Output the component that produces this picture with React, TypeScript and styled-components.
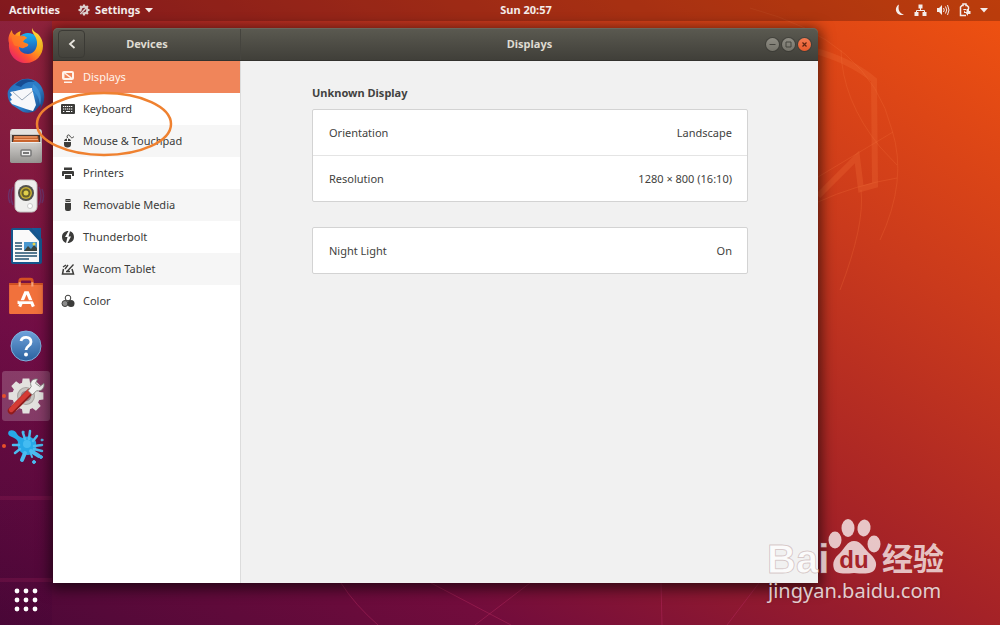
import React from "react";
import styled, { createGlobalStyle } from "styled-components";

const GlobalStyle = createGlobalStyle`
  *, *::before, *::after { box-sizing: border-box; }
  body { margin: 0; }
  body, button { font-family: "Noto Sans", "Noto Sans CJK SC", sans-serif; font-size: 11px; line-height: 16px; }
  button { margin: 0; padding: 0; border: 0; background: none; color: inherit; cursor: default; }
`;

const Desktop = styled.div`
  position: relative;
  display: flex;
  flex-direction: column;
  min-height: 100vh;
  overflow: hidden;
  background: linear-gradient(to top right, #4c0838 0%, #720c3c 25%, #a42227 50%, #ca3a1c 74%, #f05210 100%);
`;

const Wallpaper = styled.svg`
  position: absolute;
  inset: 0;
  width: 100%;
  height: 100%;
`;

const TopBar = styled.header`
  position: relative;
  display: grid;
  grid-template-columns: 1fr auto 1fr;
  align-items: center;
  height: 21px;
  padding: 0 12px 1px 9px;
  background: rgba(30, 0, 0, 0.25);
  color: #f4ecea;
`;

const BarGroup = styled.div<{ $end?: boolean }>`
  display: flex;
  align-items: center;
  gap: ${(p) => (p.$end ? 9 : 18)}px;
  justify-content: ${(p) => (p.$end ? "flex-end" : "flex-start")};
`;

const BarButton = styled.button`
  display: flex;
  align-items: center;
  gap: 5px;
  font-weight: 700;
`;

const Clock = styled(BarButton)`
  margin-left: 55px;
`;

const Body = styled.div`
  position: relative;
  display: flex;
  flex: 1;
`;

const Dock = styled.nav`
  display: flex;
  flex-direction: column;
  align-items: center;
  width: 52px;
  background: linear-gradient(rgba(120, 34, 80, 0.5), rgba(110, 16, 90, 0.3) 50%, rgba(60, 0, 50, 0.2));
`;

const DockItem = styled.button<{ $active?: boolean; $running?: boolean }>`
  position: relative;
  display: flex;
  align-items: center;
  justify-content: center;
  width: 48px;
  height: 50px;
  border-radius: 3px;
  background: ${(p) => (p.$active ? "rgba(255,255,255,0.2)" : "none")};
  &::before {
    content: "";
    display: ${(p) => (p.$running ? "block" : "none")};
    position: absolute;
    left: 0;
    width: 4px;
    height: 4px;
    border-radius: 2px;
    background: #e8502a;
  }
`;

const AppsButton = styled(DockItem)`
  margin-top: auto;
`;

const Workspace = styled.main`
  display: flex;
  flex: 1;
  padding: 7px 18.2% 42px 1px;
`;

const Window = styled.section`
  position: relative;
  display: grid;
  grid-template-columns: 188px 1fr;
  grid-template-rows: 33px 1fr;
  flex: 1;
  border-radius: 5px 5px 0 0;
  box-shadow: 0 3px 14px 3px rgba(0, 0, 0, 0.6);
`;

const HeaderPart = styled.header<{ $side: "left" | "right" }>`
  display: grid;
  grid-template-columns: ${(p) => (p.$side === "left" ? "27px 1fr 27px" : "57px 1fr 57px")};
  align-items: center;
  padding: 0 5px;
  border-radius: ${(p) => (p.$side === "left" ? "5px 0 0 0" : "0 5px 0 0")};
  background: linear-gradient(#5b5a51, #403f39);
  box-shadow: inset 0 1px 0 #69675d, inset ${(p) => (p.$side === "left" ? "-1px" : "0")} 0 0 #45443e;
  border-bottom: 1px solid #33322e;
  color: #dfdbd2;
`;

const Title = styled.h1`
  grid-column: 2;
  margin: 0;
  font-size: 11px;
  line-height: 16px;
  font-weight: 700;
  text-align: center;
`;

const BackButton = styled.button`
  display: flex;
  align-items: center;
  justify-content: center;
  width: 27px;
  height: 28px;
  border: 1px solid #3b3a35;
  border-radius: 4px;
`;

const Controls = styled.div`
  display: flex;
  justify-content: flex-end;
  gap: 3px;
  padding-right: 2px;
`;

const Control = styled.button<{ $close?: boolean }>`
  display: flex;
  width: 13px;
  height: 13px;
  border-radius: 50%;
  background: ${(p) => (p.$close ? "linear-gradient(#f47b52, #e85a2c)" : "linear-gradient(#8f8d84, #75736a)")};
  box-shadow: 0 0 0 1px rgba(45, 44, 40, 0.4);
`;

const Sidebar = styled.nav`
  background: #fff;
  border-right: 1px solid #dcdcdc;
`;

const SideItem = styled.button<{ $selected?: boolean }>`
  display: flex;
  align-items: center;
  gap: 8px;
  width: 100%;
  height: 32px;
  padding: 0 8px;
  color: ${(p) => (p.$selected ? "#fff3ec" : "#3c3c3a")};
  &:nth-child(odd) { background: #f6f6f6; }
  &:nth-child(even) { background: #fff; }
  && { ${(p) => (p.$selected ? "background: #f0855a;" : "")} }
`;

const Content = styled.div`
  padding: 24px 70px 24px 71px;
  background: #f1f1f1;
  color: #424240;
`;

const Heading = styled.h2`
  margin: 0 0 8px;
  font-size: 11px;
  line-height: 16px;
  font-weight: 700;
`;

const Card = styled.div`
  margin-bottom: 25px;
  border: 1px solid #d3d3d3;
  border-radius: 2px;
  background: #fff;
`;

const CardRow = styled.button`
  display: flex;
  align-items: center;
  justify-content: space-between;
  width: 100%;
  height: 45px;
  padding: 0 15px 0 16px;
  & + & { height: 46px; border-top: 1px solid #e4e4e4; }
`;

const Marker = styled.svg`
  position: absolute;
  left: -19px;
  top: 62px;
  pointer-events: none;
`;

const Watermark = styled.aside`
  position: absolute;
  right: 50px;
  bottom: 25px;
  display: flex;
  flex-direction: column;
  color: rgba(255, 255, 255, 0.78);
`;

const MarkUrl = styled.span`
  font-size: 20px;
  line-height: 18px;
  text-shadow: 0 0 2px rgba(90, 30, 30, 0.5);
`;

const sideIcons: Record<string, React.ReactNode> = {
  Displays: (
    <>
      <path fill="currentColor" fillRule="evenodd" d="M3 1h8a2 2 0 0 1 2 2v5a2 2 0 0 1-2 2H3a2 2 0 0 1-2-2V3a2 2 0 0 1 2-2zm.500 2v5h7.500V3z" />
      <path d="M3.500 3l7 5.200" stroke="currentColor" strokeWidth="1.500" />
      <path d="M3 11.500h8V13H3z" fill="currentColor" />
    </>
  ),
  Keyboard: (
    <>
      <rect x="0" y="2" width="14" height="10" rx="1" fill="currentColor" />
      <path d="M2 4.500h10M2 7h10M2 9.500h2M10 9.500h2" stroke="#fff" strokeDasharray="1.300 .7" />
      <path d="M5 9.500h4" stroke="#fff" />
    </>
  ),
  "Mouse & Touchpad": (
    <>
      <path d="M3 7h3V4.500A3 3 0 0 0 3 7zM7 7h3a3 3 0 0 0-3-2.500zM3 8h7v2.500a3.500 3 0 0 1-7 0z" fill="currentColor" />
      <path d="M6.500 4C5 1 8 0 9 2s2 2.500 4 .5" fill="none" stroke="currentColor" />
    </>
  ),
  Printers: (
    <path fill="currentColor" d="M3 1.500h8V4H3zM2 5h10a1 1 0 0 1 1 1v4h-2V8H3v2H1V6a1 1 0 0 1 1-1zM4 9h6v4H4z" />
  ),
  "Removable Media": (
    <path fill="currentColor" fillRule="evenodd" d="M4.500 1h5v3h-5zM5.500 2v1h1V2zm2 0v1h1V2zM4 5h6v6a2 2 0 0 1-2 2H6a2 2 0 0 1-2-2z" />
  ),
  Thunderbolt: (
    <path fill="currentColor" d="M7.500 1 4 7h2.500L5 13C2.500 12 1 10 1 7c0-3.500 2.500-6 6.500-6zM9 1.200C11.500 2 13 4 13 7c0 3.500-2.500 6-6.500 6L10 6.500H7.500z" />
  ),
  "Wacom Tablet": (
    <>
      <path d="M2.500 7 1.500 12h11L11 7" fill="none" stroke="currentColor" strokeWidth="1.500" />
      <path d="M12.500 2.500 6 9.500M2 5l3-2M4 7l3-4M5 9.500h4" stroke="currentColor" strokeWidth="1.300" fill="none" />
    </>
  ),
  Color: (
    <>
      <circle cx="7" cy="4" r="2.800" fill="none" stroke="currentColor" />
      <circle cx="4" cy="9.500" r="3" fill="#8b8b8b" stroke="currentColor" />
      <circle cx="10" cy="9.500" r="3.500" fill="currentColor" />
    </>
  ),
};

const FirefoxIcon = () => (
  <svg width="36" height="38" viewBox="0 0 36 38">
    <defs>
      <linearGradient id="fox" x1="1" y1="0" x2="0.1" y2="1">
        <stop offset="0" stopColor="#fff04a" /><stop offset=".4" stopColor="#ffb01a" />
        <stop offset=".68" stopColor="#ff542f" /><stop offset="1" stopColor="#e3137c" />
      </linearGradient>
      <linearGradient id="globe" x1="0" y1="0" x2="0" y2="1">
        <stop offset="0" stopColor="#18b4f5" /><stop offset="1" stopColor="#2440a0" />
      </linearGradient>
    </defs>
    <circle cx="20" cy="18" r="12" fill="url(#globe)" />
    <path fill="url(#fox)" d="M24 1c-1 6 6 8 5 17-1 6-5 9-9 9-5 0-9-3-9-7 2 1 4 2 6 0 2-1 4-1 3-3-2-1-3-1-5-2 0-2 2-3 4-4-2-2-4-2-5-1l-2-1c0-2 0-3 1-5-3 1-5 2-6 4-2-1-3-2-3-5C0 8 0 13 1 16c-1 12 7 20 17 20s17-8 17-17c0-5-2-9-5-12-3-2-5-3-6-6z" />
    <path fill="#ff7a26" d="M4 6c2 3 5 3 7 3 3-1 6 0 8 2-2 1-5 3-3 5l4 1c1 2-3 5-8 3-2-1-4 0-6-2-2-4-3-8-2-12z" opacity=".75" />
  </svg>
);

const ThunderbirdIcon = () => (
  <svg width="38" height="38" viewBox="0 0 38 38">
    <defs><linearGradient id="bird" x1="0" y1="0" x2="1" y2="1">
      <stop offset="0" stopColor="#256cb8" /><stop offset=".6" stopColor="#2f83cc" /><stop offset="1" stopColor="#12387a" />
    </linearGradient></defs>
    <path fill="url(#bird)" d="M1 14C4 8 9 6 12 4 17 0 29 1 34 9c5 8 4 17-1 23l1-5-6 7c-4 2-8 2-12 1L5 28C1 24 0 18 1 14z" />
    <path fill="#174c91" d="M8 8C14 1 23 1 28 5c-7-1-11 1-14 5z" />
    <path fill="#f7f8fa" d="M3 15c8-1 14-4 22-4l4 17-3 6-7-2-14-5-2-3 2-1-2-3 2-2z" />
    <path d="M6 15l9 8 11-9" stroke="#9aa8b8" strokeWidth="1" fill="none" />
    <path fill="#3c91d8" d="M26 7c8 6 9 14 7 21-1-9-4-12-8-15z" />
  </svg>
);

const FilesIcon = () => (
  <svg width="36" height="38" viewBox="0 0 36 38">
    <defs><linearGradient id="drawer" x1="0" y1="0" x2="0" y2="1">
      <stop offset="0" stopColor="#d2d0cd" /><stop offset="1" stopColor="#969491" />
    </linearGradient></defs>
    <rect x="2" y="2" width="32" height="34" rx="3" fill="url(#drawer)" />
    <path d="M4 2h28l2 5H2z" fill="#e3e1de" />
    <path d="M4 8h28v8H4z" fill="#46362f" />
    <path d="M6 9h24l1 6H5z" fill="#c9652f" /><path d="M6 10h23M6 12.500h24" stroke="#f5a878" />
    <rect x="2" y="15" width="32" height="21" rx="2" fill="url(#drawer)" />
    <path d="M3 15.500h30" stroke="#eee" />
    <rect x="13" y="23" width="10" height="6" rx="1" fill="#eee" stroke="#777" strokeWidth="1.500" />
    <rect x="15" y="25" width="6" height="2" fill="#777" />
  </svg>
);

const MusicIcon = () => (
  <svg width="38" height="36" viewBox="0 0 38 36">
    <path d="M6 9q-4 9 0 18M3 11q-3 7 0 14M32 9q4 9 0 18M35 11q3 7 0 14" stroke="#5c4b92" fill="none" strokeWidth="1.500" opacity=".5" />
    <rect x="8" y="2" width="22" height="32" rx="5" fill="#eeeeed" stroke="#c4c3c1" />
    <circle cx="19" cy="15" r="8" fill="#52524d" />
    <circle cx="19" cy="15" r="6" fill="#c6ae31" /><circle cx="19" cy="15" r="4.500" fill="#675f2a" />
    <circle cx="19" cy="15" r="2.500" fill="#e1d04c" /><circle cx="23" cy="28" r="2.500" fill="#fff" stroke="#ccc" />
  </svg>
);

const WriterIcon = () => (
  <svg width="34" height="38" viewBox="0 0 34 38">
    <path d="M4 1h18l11 11v23a2 2 0 0 1-2 2H4a2 2 0 0 1-2-2V3a2 2 0 0 1 2-2z" fill="#15578d" />
    <path d="M4 3h16l10 11v21H4z" fill="#fafafa" />
    <path d="M22 1h10v11z" fill="#155c99" />
    <path d="M6 16h7M6 19h7M6 22h7M6 26h22M6 29h22M6 32h14" stroke="#20506f" strokeWidth="1.700" />
    <rect x="15" y="15" width="13" height="9" fill="#4a98cf" />
    <path d="M15 24l4-5 3 3 3-4 3 3v3z" fill="#3c453f" /><circle cx="25" cy="17" r="1.500" fill="#e7d44b" />
  </svg>
);

const SoftwareIcon = () => (
  <svg width="36" height="38" viewBox="0 0 34 36">
    <path d="M11 8V4q0-2 2-2h8q2 0 2 2v4" fill="none" stroke="#d55122" strokeWidth="2.500" />
    <path d="M1 6h32v28a1 1 0 0 1-1 1H2a1 1 0 0 1-1-1z" fill="#f1713c" />
    <path d="M1 6h32v1.500H1z" fill="#cf501f" />
    <path d="M11 5v4M23 5v4" stroke="#f4a37c" strokeWidth="2" />
    <path d="M11 28l5.500-13h2L24 28M9 24h14" stroke="#fff" strokeWidth="3" fill="none" />
    <path d="M10 22.500h15" stroke="#f1713c" strokeWidth="1" />
  </svg>
);

const HelpIcon = () => (
  <svg width="34" height="36" viewBox="0 0 34 36">
    <defs><linearGradient id="help" x1="0" y1="0" x2="0" y2="1">
      <stop offset="0" stopColor="#6fa2db" /><stop offset="1" stopColor="#2b629f" />
    </linearGradient></defs>
    <circle cx="17" cy="18" r="15" fill="url(#help)" stroke="#7fb2df" />
    <path d="M12 13c1-5 10-5 10 1 0 4-5 4-5 8" fill="none" stroke="#fff" strokeWidth="2.800" />
    <circle cx="17" cy="26.500" r="2" fill="#fff" />
  </svg>
);

const GearShape = ({ color }: { color: string }) => (
  <g fill={color}>
    <circle cx="18" cy="18" r="13" />
    {[0, 45, 90, 135, 180, 225, 270, 315].map((a) => (
      <path key={a} d="M14 7l.8-5.500h6.400L22 7z" transform={`rotate(${a} 18 18)`} />
    ))}
  </g>
);

const SettingsIcon = () => (
  <svg width="38" height="38" viewBox="0 0 36 36">
    <GearShape color="#e3e2df" />
    <circle cx="18" cy="18" r="8" fill="#c6c4c0" stroke="#a7a4a0" />
    <circle cx="18" cy="18" r="5" fill="#98858d" />
    <path d="M4 32L22 14" stroke="#8f1c1c" strokeWidth="6.500" strokeLinecap="round" />
    <path d="M4 31L21 14" stroke="#d43b35" strokeWidth="4.500" strokeLinecap="round" />
    <path d="M20 13l4 4 4-4c5 1 8-3 7-7l-4 3-4-3 2-4c-5-1-8 3-6 7z" fill="#f2f2f0" stroke="#80807c" strokeWidth=".8" />
  </svg>
);

const SplashIcon = () => (
  <svg width="38" height="38" viewBox="0 0 38 38" stroke="#4bbcf0" strokeLinecap="round">
    <path fill="#27a9e8" stroke="none" d="M2 4C5 2 9 4 10 7c2 3 4 3 6 4 3-2 7-2 9 0 3 1 5 4 4 7 1 4-1 7-4 9-4 2-9 1-11-2-3-2-4-6-3-10-1-3-4-4-6-5C2 9 0 7 2 4z" />
    <path d="M18 12l-2-6M22 12l1-8M26 14l4-5M27 19l8-1M27 22l8 2M12 18l-6 0M13 22l-5 4" strokeWidth="2.500" />
    <path d="M24 24l8 5M18 26l-3 7" strokeWidth="4" /><path d="M24 27l1 3" strokeWidth="2" />
    <circle cx="34" cy="30" r="1.500" fill="#4bbcf0" /><circle cx="27" cy="35" r="1.500" fill="#4bbcf0" />
    <circle cx="16" cy="5" r="1" fill="#4bbcf0" /><circle cx="35" cy="13" r="1" fill="#4bbcf0" />
    <circle cx="20" cy="17" r="4" fill="#58caf8" stroke="none" opacity=".6" />
  </svg>
);

const AppsIcon = () => (
  <svg width="26" height="26" viewBox="0 0 26 26" fill="#fff">
    {[4, 13, 22].map((y) => [4, 13, 22].map((x) => <circle key={`${x}-${y}`} cx={x} cy={y} r="2.400" />))}
  </svg>
);

const dockApps = [
  { name: "Firefox", icon: <FirefoxIcon /> },
  { name: "Thunderbird", icon: <ThunderbirdIcon /> },
  { name: "Files", icon: <FilesIcon /> },
  { name: "Rhythmbox", icon: <MusicIcon /> },
  { name: "LibreOffice Writer", icon: <WriterIcon /> },
  { name: "Ubuntu Software", icon: <SoftwareIcon /> },
  { name: "Help", icon: <HelpIcon /> },
  { name: "Settings", icon: <SettingsIcon />, active: true, running: true },
  { name: "Shutter", icon: <SplashIcon />, running: true },
];

const Caret = () => <svg width="8" height="5" viewBox="0 0 8 5"><path d="M0 0h8L4 4.500z" fill="currentColor" /></svg>;

const StatusIcons = () => (
  <>
    <svg width="12" height="14" viewBox="0 0 12 14"><path d="M6 1.500A5.500 5.500 0 1 0 11 11.500C7 11 4.500 7 6 1.500z" fill="currentColor" /></svg>
    <svg width="13" height="14" viewBox="0 0 13 14"><path d="M4.500 1.500h4v4h-4zM.5 9h4v4h-4zM8.500 9h4v4h-4z" fill="currentColor" /><path d="M6.500 5v2.500M2.500 9V7.500h8V9" fill="none" stroke="currentColor" /></svg>
    <svg width="14" height="14" viewBox="0 0 14 14"><path d="M1 5h2l3-3v10L3 9H1z" fill="currentColor" /><path d="M7.500 5q1.500 2 0 4M9.500 3.500q2.500 3.500 0 7M11.500 2q3 5 0 10" fill="none" stroke="currentColor" /></svg>
    <svg width="12" height="14" viewBox="0 0 12 14"><path d="M9.500 6V4L8 2.500H7V1H4v1.500H3L1.500 4v8.500H7" fill="none" stroke="currentColor" strokeWidth="1.500" /><path d="M4 6h3v1H5v3h2M7.500 6v3H6l3 4v-2h2.500V8H10V6z" fill="currentColor" /></svg>
    <Caret />
  </>
);

export default function App() {
  return (
    <Desktop>
      <GlobalStyle />
      <Wallpaper viewBox="0 0 1000 625" preserveAspectRatio="none" fill="none" aria-hidden="true">
        <g stroke="#f0703a" strokeOpacity=".28">
          <path d="M812 50Q850 60 874 80L875 185L861 189L857 157L818 196" strokeWidth="6" />
          <path d="M750 8Q870 40 892 130Q908 180 880 240M841 50Q842 100 880 147L897 165M818 202Q855 185 897 178M818 177L893 132" />
          <path d="M861 190Q865 225 840 290" />
        </g>
        <g stroke="#b52a60" strokeOpacity=".45">
          <path d="M341 583Q355 605 378 625M431 583L511 625M530 583L475 625M661 583L662 625M759 583L727 625" />
          <path d="M0 498H52M0 580H52" strokeWidth="4" strokeOpacity=".25" />
        </g>
      </Wallpaper>
      <TopBar>
        <BarGroup>
          <BarButton>Activities</BarButton>
          <BarButton>
            <svg width="12" height="12" viewBox="0 0 36 36">
              <GearShape color="#ddd2d0" />
              <circle cx="18" cy="18" r="7" fill="#812028" />
              <path d="M4 32L22 14" stroke="#812028" strokeWidth="8" />
              <path d="M7 30L24 12" stroke="#ddd2d0" strokeWidth="4" />
            </svg>
            Settings
            <Caret />
          </BarButton>
        </BarGroup>
        <Clock>Sun 20:57</Clock>
        <BarGroup $end><StatusIcons /></BarGroup>
      </TopBar>
      <Body>
        <Dock aria-label="Dock">
          {dockApps.map((a) => (
            <DockItem key={a.name} aria-label={a.name} $active={a.active} $running={a.running}>{a.icon}</DockItem>
          ))}
          <AppsButton aria-label="Show Applications"><AppsIcon /></AppsButton>
        </Dock>
        <Workspace>
          <Window>
            <HeaderPart $side="left">
              <BackButton aria-label="Back">
                <svg width="8" height="12" viewBox="0 0 8 12"><path d="M6.500 2L2 6l4.500 4" fill="none" stroke="#e8e5de" strokeWidth="1.800" /></svg>
              </BackButton>
              <Title>Devices</Title>
            </HeaderPart>
            <HeaderPart $side="right">
              <Title>Displays</Title>
              <Controls>
                <Control aria-label="Minimize"><svg width="13" height="13"><path d="M3.500 6.500h6" stroke="#45443e" /></svg></Control>
                <Control aria-label="Maximize"><svg width="13" height="13"><path d="M4 4h5v5H4z" fill="none" stroke="#45443e" /></svg></Control>
                <Control aria-label="Close" $close><svg width="13" height="13"><path d="M4.500 4.500l4 4M8.500 4.500l-4 4" stroke="#5f2411" strokeWidth="1.200" /></svg></Control>
              </Controls>
            </HeaderPart>
            <Sidebar aria-label="Devices">
              {Object.entries(sideIcons).map(([name, icon]) => (
                <SideItem key={name} $selected={name === "Displays"}>
                  <svg width="14" height="14" viewBox="0 0 14 14">{icon}</svg>
                  {name}
                </SideItem>
              ))}
            </Sidebar>
            <Content>
              <Heading>Unknown Display</Heading>
              <Card>
                <CardRow><span>Orientation</span><span>Landscape</span></CardRow>
                <CardRow><span>Resolution</span><span>1280 × 800 (16:10)</span></CardRow>
              </Card>
              <Card>
                <CardRow><span>Night Light</span><span>On</span></CardRow>
              </Card>
            </Content>
            <Marker width="140" height="68" viewBox="0 0 140 68" aria-hidden="true">
              <ellipse cx="70" cy="34" rx="67" ry="31" fill="none" stroke="#ef8130" strokeWidth="2.500" />
            </Marker>
          </Window>
        </Workspace>
      </Body>
      <Watermark>
        <svg width="182" height="66" viewBox="0 0 182 66" fill="rgba(255,255,255,.74)" overflow="visible">
          <g fontFamily='"Liberation Sans", "Noto Sans CJK SC", sans-serif' fontWeight="700">
            <text x="-1" y="57" fontSize="40" stroke="#8a5555" strokeOpacity=".28">Bai</text>
            <text x="114" y="54" fontSize="31" fontFamily='"Noto Sans CJK SC", sans-serif'>经验</text>
          </g>
          <g>
            <ellipse cx="67" cy="24" rx="6.500" ry="8.500" /><ellipse cx="80" cy="12" rx="6.500" ry="9" />
            <ellipse cx="96" cy="12" rx="6.500" ry="8.500" transform="rotate(10 96 12)" /><ellipse cx="106" cy="28" rx="6.500" ry="8.500" />
            <path d="M86 25c7 0 9 6 14 11 7 6 10 11 7 17-3 5-9 5-21 4-11 1-18 1-20-4-2-6 0-11 6-16 5-5 7-12 14-12z" />
          </g>
          <text x="86" y="52" fontSize="24" fontWeight="700" textAnchor="middle" fontFamily='"Liberation Sans", sans-serif' fill="#a5232a">du</text>
        </svg>
        <MarkUrl>jingyan.baidu.com</MarkUrl>
      </Watermark>
    </Desktop>
  );
}
